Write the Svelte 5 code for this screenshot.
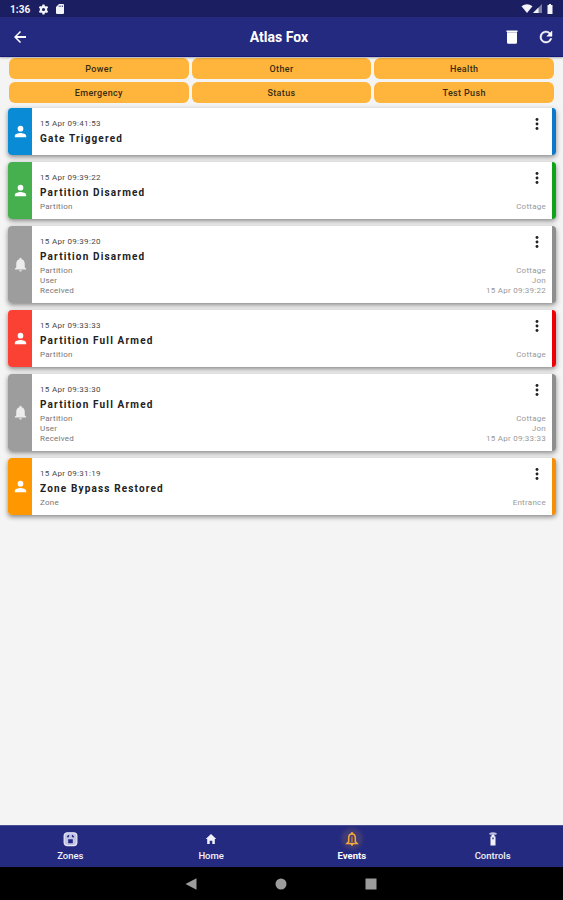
<script lang="ts">
  type Detail = { label: string; value: string };
  type EventItem = {
    time: string;
    title: string;
    kind: "user" | "bell";
    tone: string;
    details: Detail[];
  };

  const filters = ["Power", "Other", "Health", "Emergency", "Status", "Test Push"];

  const events: EventItem[] = [
    { time: "15 Apr 09:41:53", title: "Gate Triggered", kind: "user", tone: "blue", details: [] },
    {
      time: "15 Apr 09:39:22",
      title: "Partition Disarmed",
      kind: "user",
      tone: "green",
      details: [{ label: "Partition", value: "Cottage" }],
    },
    {
      time: "15 Apr 09:39:20",
      title: "Partition Disarmed",
      kind: "bell",
      tone: "grey",
      details: [
        { label: "Partition", value: "Cottage" },
        { label: "User", value: "Jon" },
        { label: "Received", value: "15 Apr 09:39:22" },
      ],
    },
    {
      time: "15 Apr 09:33:33",
      title: "Partition Full Armed",
      kind: "user",
      tone: "red",
      details: [{ label: "Partition", value: "Cottage" }],
    },
    {
      time: "15 Apr 09:33:30",
      title: "Partition Full Armed",
      kind: "bell",
      tone: "grey",
      details: [
        { label: "Partition", value: "Cottage" },
        { label: "User", value: "Jon" },
        { label: "Received", value: "15 Apr 09:33:33" },
      ],
    },
    {
      time: "15 Apr 09:31:19",
      title: "Zone Bypass Restored",
      kind: "user",
      tone: "orange",
      details: [{ label: "Zone", value: "Entrance" }],
    },
  ];

  const tabs = ["Zones", "Home", "Events", "Controls"];
  let active = $state("Events");
</script>

<div class="screen">
  <div class="status">
    <span class="clock">1:36</span>
    <svg class="gear" viewBox="0 0 24 24" width="11" height="11">
      <path d="M9.800 1h4.400l.6 3 2.200 1.200 2.900-1 2.200 3.800L19.900 10v4l2.200 2-2.200 3.800-2.900-1-2.200 1.200-.6 3H9.800l-.6-3L7 18.800l-2.900 1L1.900 16l2.200-2v-4L1.900 8l2.200-3.800 2.900 1L9.200 4zM12 8.500a3.500 3.500 0 1 0 0 7 3.500 3.500 0 0 0 0-7z" fill-rule="evenodd" />
    </svg>
    <svg class="sd" viewBox="0 0 24 24" width="12" height="12">
      <path d="M18 2h-8L4 8v12a2 2 0 0 0 2 2h12a2 2 0 0 0 2-2V4a2 2 0 0 0-2-2zM9.500 5h1.500v3H9.500zm3.500 0h1.500v3H13zM16.500 5H18v3h-1.500z" fill-rule="evenodd" />
    </svg>
    <span class="spacer"></span>
    <svg class="wifi" viewBox="0 0 12 10" width="12" height="10">
      <path d="M0.500 2.200Q6-1.500 11.500 2.200L6 9z" />
    </svg>
    <svg class="signal" viewBox="0 0 10 10" width="10" height="10">
      <path d="M9 0v9H0z" opacity=".45" />
      <path d="M5.500 3.500V9H0z" />
    </svg>
    <svg class="battery" viewBox="0 0 6 10" width="6" height="10">
      <path d="M2 0h2v1h1.500v9h-5V1H2z" />
    </svg>
  </div>

  <header>
    <svg class="back" viewBox="0 0 24 24" width="18" height="18">
      <path d="M20 10.700H8.100l5.300-5.290L12 4l-8 8 8 8 1.400-1.410-5.300-5.290H20v-2.600z" />
    </svg>
    <h1>Atlas Fox</h1>
    <div class="actions">
      <svg viewBox="0 0 12 14" width="12" height="14">
        <path d="M.5 0.500h11V2H.5zM1 2.300h10v10.200a1.300 1.300 0 0 1-1.300 1.300H2.300A1.300 1.300 0 0 1 1 12.500z" />
      </svg>
      <svg viewBox="0 0 24 24" width="18" height="18" stroke="currentColor" stroke-width=".6">
        <path d="M17.650 6.350A7.960 7.960 0 0 0 12 4a8 8 0 1 0 7.730 10h-2.080A6 6 0 1 1 12 6c1.660 0 3.140.69 4.220 1.780L13 11h7V4l-2.350 2.350z" />
      </svg>
    </div>
  </header>

  <main>
    <div class="filters">
      {#each filters as filter}
        <button>{filter}</button>
      {/each}
    </div>

    <div class="events">
      {#each events as item}
        <article class="card {item.tone}">
          <div class="side">
            {#if item.kind === "user"}
              <svg viewBox="0 0 24 24" width="17" height="17">
                <path d="M12 12a4 4 0 1 0 0-8 4 4 0 0 0 0 8zm0 2c-2.670 0-8 1.340-8 4v2h16v-2c0-2.660-5.330-4-8-4z" />
              </svg>
            {:else}
              <svg class="bell" viewBox="0 0 24 24" width="17" height="17">
                <path d="M12 22a2 2 0 0 0 2-2h-4a2 2 0 0 0 2 2zm6-6v-5c0-3.070-1.640-5.640-4.500-6.320V4a1.500 1.500 0 0 0-3 0v.68C7.630 5.360 6 7.920 6 11v5l-2 2v1h16v-1l-2-2z" />
              </svg>
            {/if}
          </div>
          <div class="body">
            <div class="time">{item.time}</div>
            <div class="title">{item.title}</div>
            {#if item.details.length}
              <div class="details">
                {#each item.details as detail}
                  <div class="row">
                    <span>{detail.label}</span>
                    <span class="value">{detail.value}</span>
                  </div>
                {/each}
              </div>
            {/if}
          </div>
          <svg class="more" viewBox="0 0 4 12" width="4" height="12">
            <circle cx="2" cy="1.500" r="1.450" />
            <circle cx="2" cy="6" r="1.450" />
            <circle cx="2" cy="10.500" r="1.450" />
          </svg>
        </article>
      {/each}
    </div>
  </main>

  <nav>
    {#each tabs as tab}
      <button class="tab" class:active={active === tab} onclick={() => (active = tab)}>
        {#if tab === "Zones"}
          <svg viewBox="0 0 16 16" width="16" height="16">
            <rect x="2.200" y="1.800" width="12.600" height="12.800" rx="3" fill="#c3c5e6" stroke="#e4e5f5" stroke-width="1.300" />
            <path d="M4.700 5.800L6.500 3.700l1 1.300-1.500 1.700zM12.300 5.800L10.500 3.700l-1 1.300L11 6.700zM6.200 8.300h4.600v4H6.200z" fill="#242a80" />
          </svg>
        {:else if tab === "Home"}
          <svg viewBox="0 0 16 16" width="16" height="16">
            <path d="M8 3l5.300 5h-1.500v5H9.300V9.800H6.700V13H4.200V8H2.700z" />
          </svg>
        {:else if tab === "Events"}
          <svg class="glow" viewBox="0 0 16 16" width="16" height="16">
            <path d="M8 2.800C5.700 3.200 4.700 4.800 4.700 7v3.500L3 12.500h10l-1.700-2V7c0-2.200-1-3.800-3.300-4.200z" fill="none" stroke="#f5ab3b" stroke-width="1.500" />
            <path d="M7 5.500h2V11H7z" fill="#a8663c" />
            <path d="M6.300 13h3.400L8 15.300zM7 1.200h2v2H7z" fill="#f5ab3b" />
          </svg>
        {:else}
          <svg viewBox="0 0 16 16" width="16" height="16">
            <path d="M4 2.500Q8 0 12 2.500L11 4Q8 2.200 5 4z" opacity=".75" />
            <path d="M6.500 3.200h3v2.300h1v9h-5v-9h1zM7.300 6.500v1.800h1.400V6.500z" fill-rule="evenodd" />
          </svg>
        {/if}
        <span>{tab}</span>
      </button>
    {/each}
  </nav>

  <div class="system">
    <svg viewBox="0 0 12 12" width="12" height="12"><path d="M.5 6L11.500 .2v11.600z" /></svg>
    <svg viewBox="0 0 12 12" width="12" height="12"><circle cx="6" cy="6" r="5.500" /></svg>
    <svg viewBox="0 0 12 12" width="12" height="12"><path d="M.5.5h11v11H.5z" /></svg>
  </div>
</div>

<style>
  :global(body) {
    margin: 0;
  }

  .screen {
    display: flex;
    flex-direction: column;
    height: 900px;
    overflow: hidden;
    background: #f4f4f4;
    font-family: Roboto, sans-serif;
  }

  svg {
    display: block;
    flex: none;
    fill: currentColor;
  }

  button {
    margin: 0;
    padding: 0;
    border: 0;
    font-family: inherit;
  }

  .status {
    display: flex;
    flex: none;
    align-items: center;
    box-sizing: border-box;
    height: 17px;
    padding: 1px 10px 0;
    background: #1b1e60;
    color: #f4f5fb;
  }

  .clock {
    width: 28px;
    font-size: 10px;
    font-weight: 700;
    letter-spacing: 0.1px;
  }

  .sd {
    margin-left: 5px;
  }

  .spacer {
    flex: 1;
  }

  .battery {
    margin: 0 0 1px 4px;
  }

  header {
    z-index: 1;
    display: grid;
    flex: none;
    grid-template-columns: 1fr auto 1fr;
    align-items: center;
    box-sizing: border-box;
    height: 40px;
    padding: 0 8px 0 11px;
    background: #242a80;
    border-bottom: 1px solid #15197a;
    box-shadow: 0 1px 2px rgba(0, 0, 0, 0.3);
    color: #fff;
  }

  h1 {
    margin: 0 8px 0 0;
    font-size: 14px;
    font-weight: 700;
    line-height: 20px;
  }

  .actions {
    display: flex;
    align-items: center;
    justify-content: flex-end;
    gap: 19px;
  }

  main {
    flex: 1;
    min-height: 0;
    padding: 1px 7px 0 8px;
  }

  .filters {
    display: grid;
    grid-template-columns: repeat(3, 1fr);
    gap: 3px;
    padding: 0 2px 0 1px;
  }

  .filters button {
    box-sizing: border-box;
    height: 21px;
    padding-top: 1px;
    border-radius: 6px;
    background: #ffb53c;
    color: #3a2c12;
    font-size: 9px;
    font-weight: 500;
    letter-spacing: 0.35px;
    line-height: 20px;
  }

  .events {
    display: flex;
    flex-direction: column;
    gap: 7px;
    margin-top: 5px;
  }

  .card {
    display: flex;
    position: relative;
    box-sizing: border-box;
    min-height: 47px;
    border-right: 4px solid var(--edge);
    border-radius: 4px;
    background: #fff;
    box-shadow: 0 2px 5px rgba(0, 0, 0, 0.45);
  }

  .blue {
    --tone: #0a8bd6;
    --edge: #0b78cc;
  }

  .green {
    --tone: #45b04d;
    --edge: #10a31a;
  }

  .grey {
    --tone: #9d9d9d;
    --edge: #8e8e8e;
  }

  .red {
    --tone: #fb4034;
    --edge: #ec0007;
  }

  .orange {
    --tone: #ff9800;
    --edge: #f48f06;
  }

  .side {
    display: flex;
    flex: none;
    align-items: center;
    justify-content: center;
    width: 24px;
    border-radius: 4px 0 0 4px;
    background: var(--tone);
    color: #fff;
  }

  .bell {
    color: #ececec;
  }

  .body {
    flex: 1;
    padding: 10px 6px 7px 8px;
  }

  .time {
    color: #484848;
    font-size: 8px;
    letter-spacing: 0.3px;
    line-height: 11px;
  }

  .title {
    padding-top: 1px;
    color: #222;
    font-size: 10px;
    font-weight: 700;
    letter-spacing: 1.160px;
    line-height: 18px;
  }

  .row {
    display: flex;
    justify-content: space-between;
    color: #757575;
    font-size: 8px;
    letter-spacing: 0.250px;
    line-height: 10px;
  }

  .value {
    color: #999;
  }

  .more {
    position: absolute;
    top: 10px;
    right: 13px;
    color: #222;
  }

  nav {
    display: grid;
    flex: none;
    grid-template-columns: repeat(4, 1fr);
    box-sizing: border-box;
    height: 42px;
    border-top: 1px solid #4b4f96;
    background: #242a80;
  }

  .tab {
    display: flex;
    flex-direction: column;
    align-items: center;
    padding-top: 5px;
    background: none;
    color: #f0f1fa;
    font-size: 9.500px;
    font-weight: 500;
    line-height: 12px;
  }

  .tab span {
    margin-top: 3px;
  }

  .tab.active {
    color: #fff;
    font-weight: 700;
  }

  .glow {
    overflow: visible;
    border-radius: 50%;
    background: rgba(245, 171, 59, 0.14);
    box-shadow: 0 0 5px 2px rgba(245, 171, 59, 0.2);
  }

  .system {
    display: flex;
    flex: none;
    align-items: center;
    justify-content: center;
    gap: 78px;
    height: 33px;
    padding-right: 1px;
    background: #000;
    color: #9c9c9c;
  }
</style>
